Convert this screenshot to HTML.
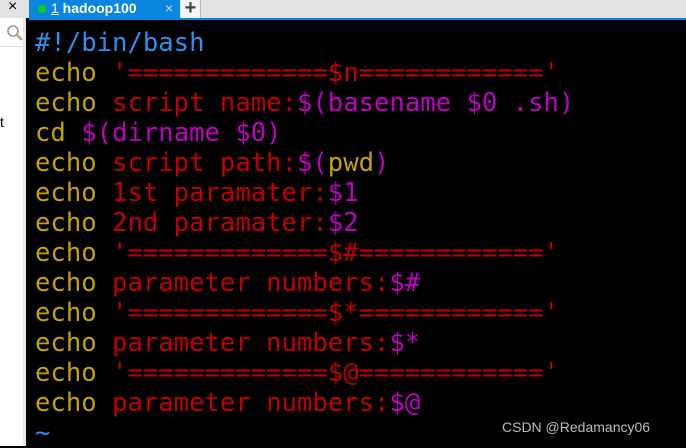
<!DOCTYPE html>
<html><head><meta charset="utf-8"><style>
*{margin:0;padding:0;box-sizing:border-box}
body{width:686px;height:446px;overflow:hidden;background:#000;position:relative;font-family:"Liberation Sans",sans-serif}
#top{position:absolute;left:0;top:0;width:686px;height:18px;background:#e3e3e3}
#line{position:absolute;left:29px;top:18px;width:657px;height:2px;background:#0a86e0}
#tab{position:absolute;left:29px;top:0;width:151px;height:20px;background:#0a86e0;color:#fff;font-weight:bold;font-size:14px;line-height:17px}
#plus{position:absolute;left:181px;top:0;width:20px;height:18px;background:#f5f5f5;border-right:1px solid #bbb;color:#444;font-size:20px;line-height:16px;text-align:center;font-weight:bold}
#left{position:absolute;left:0;top:18px;width:26px;height:428px;background:#fff;border-right:3px solid #e8e8e8}
#term{position:absolute;left:29px;top:20px;width:657px;height:426px;background:#000}
pre{position:absolute;left:35px;top:28px;font-family:"DejaVu Sans Mono","Liberation Mono",monospace;font-size:25.6px;line-height:30px;color:#c00000}
.y{color:#c4a000}.r{color:#c80000}.m{color:#c000c0}.b{color:#2f8fef}
</style></head><body>
<div id="top"></div>
<div style="position:absolute;left:8px;top:-2px;font-size:16px;color:#000">×</div>
<div id="left">
<svg style="position:absolute;left:6px;top:6px" width="18" height="18"><circle cx="7" cy="7" r="5" fill="none" stroke="#999" stroke-width="1.6"/><line x1="11" y1="11" x2="16" y2="16" stroke="#c9a070" stroke-width="2.5"/></svg>
<div style="position:absolute;left:0;top:28px;width:26px;height:1px;background:#ddd"></div>
<div style="position:absolute;left:0;top:96px;font-size:14px;color:#000">t</div>
</div>
<div id="term"></div>
<div id="line"></div>
<div id="tab"><span style="display:inline-block;width:8px;height:8px;border-radius:50%;background:#1c1;margin:0 5px 0 9px"></span><span style="text-decoration:underline;font-weight:normal">1</span> hadoop100<span style="position:absolute;left:136px;top:0;font-weight:normal;color:#cde">×</span></div>
<div id="plus">+</div>
<pre><span class="b">#!/bin/bash</span>
<span class="y">echo</span> '=============<span class="r">$n</span>============'
<span class="y">echo</span> script name:<span class="m">$(basename $0 .sh)</span>
<span class="y">cd</span> <span class="m">$(dirname $0)</span>
<span class="y">echo</span> script path:<span class="m">$(</span><span class="y">pwd</span><span class="m">)</span>
<span class="y">echo</span> 1st paramater:<span class="m">$1</span>
<span class="y">echo</span> 2nd paramater:<span class="m">$2</span>
<span class="y">echo</span> '=============$#============'
<span class="y">echo</span> parameter numbers:<span class="m">$#</span>
<span class="y">echo</span> '=============$*============'
<span class="y">echo</span> parameter numbers:<span class="m">$*</span>
<span class="y">echo</span> '=============$@============'
<span class="y">echo</span> parameter numbers:<span class="m">$@</span>
<span class="b">~</span></pre>
<div style="position:absolute;left:502px;top:419px;font-size:14px;color:#bbb">CSDN @Redamancy06</div>
</body></html>
